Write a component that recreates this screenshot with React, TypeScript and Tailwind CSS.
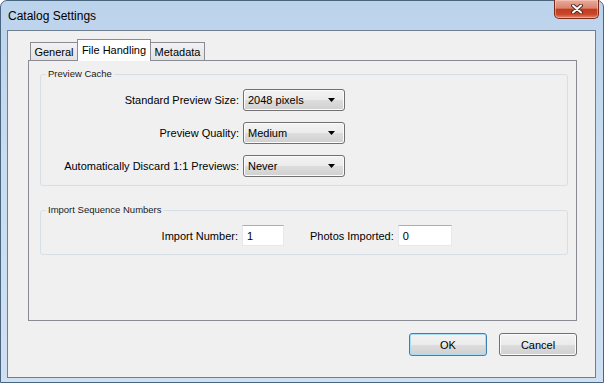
import React from 'react';

const btnFace =
  'bg-[linear-gradient(#f3f3f3_0%,#ebebeb_50%,#dddddd_51%,#d0d0d0_100%)] shadow-[inset_0_0_0_1px_#fcfcfc]';

const Select: React.FC<{ value: string }> = ({ value }) => (
  <div
    className={`w-[102px] h-[22px] flex items-center justify-between pl-[4px] pr-[9px] border border-[#707070] rounded-[3px] ${btnFace}`}
  >
    <span>{value}</span>
    <svg width="7" height="4" viewBox="0 0 7 4">
      <path d="M0 0H7L3.5 4Z" fill="#000" />
    </svg>
  </div>
);

const Field: React.FC<{ value: string; width: string }> = ({ value, width }) => (
  <div
    className={`${width} h-[21px] flex items-center pl-[4px] bg-white border border-[#e3e9ef] border-t-[#abadb3]`}
  >
    {value}
  </div>
);

const Group: React.FC<{ title: string; className?: string; children: React.ReactNode }> = ({
  title,
  className = '',
  children,
}) => (
  <fieldset className={`border border-[#d5dfe5] rounded-[3px] ${className}`}>
    <legend className="ml-[5px] px-[2px] text-[9.5px] leading-[12px] text-[#1b1b1b]">{title}</legend>
    {children}
  </fieldset>
);

export default function App() {
  return (
    <div className="w-[605px] h-[383px] overflow-hidden bg-[#fff]">
      <div className="w-[604px] h-[383px] flex flex-col rounded-t-[7px] border border-[#4a6580] bg-[linear-gradient(180deg,#bcd3ec_0%,#c9dcf0_40%,#cfe0f2_100%)] font-['Liberation_Sans',Arial,sans-serif] text-black">
        {/* Title bar */}
        <div className="h-[29px] flex items-start justify-between pl-[7px] pr-[4px]">
          <div className="pt-[7px] text-[12px] leading-[16px]">Catalog Settings</div>
          <div className="w-[45px] h-[19px] -mt-[1px] flex items-center justify-center rounded-b-[5px] border border-[#7a2b1c] border-t-0 bg-[linear-gradient(#e9ab9b_0%,#d98470_45%,#c43b1d_52%,#c9482a_80%,#e08a74_100%)] shadow-[inset_0_0_0_1px_rgba(255,220,210,0.45)]">
            <svg width="12" height="10" viewBox="0 0 12 10">
              <path d="M2 1.5L10 8.5M10 1.5L2 8.5" stroke="#5a2a22" strokeWidth="4" strokeLinecap="round" />
              <path d="M2 1.5L10 8.5M10 1.5L2 8.5" stroke="#ffffff" strokeWidth="2" strokeLinecap="round" />
            </svg>
          </div>
        </div>

        {/* Client area */}
        <div className="ml-[6px] w-[589px] h-[348px] border border-[#6f7f90] bg-[#f0f0f0] pt-[8px] pl-[20px] pr-[18px] text-[11px] leading-[14px]">
          {/* Tabs */}
          <div className="flex items-end ml-[2px] h-[21px]">
            <div className="w-[48px] h-[18px] flex items-center justify-center border border-b-0 border-[#898c95] bg-[linear-gradient(#f2f2f2,#e3e3e3)]">
              General
            </div>
            <div className="relative z-10 w-[74px] h-[22px] -mb-[1px] -ml-[1px] flex items-start justify-center pt-[3px] border border-b-0 border-[#898c95] bg-white">
              File Handling
            </div>
            <div className="w-[55px] h-[18px] -ml-[1px] flex items-center justify-center border border-b-0 border-[#898c95] bg-[linear-gradient(#f2f2f2,#e3e3e3)]">
              Metadata
            </div>
          </div>

          {/* Tab panel */}
          <div className="h-[261px] border border-[#898c95] bg-[#f0f0f0] pl-[11px] pr-[8px] pt-[7px]">
            <Group title="Preview Cache" className="h-[118px] pt-[9px]">
              <div className="flex flex-col gap-[11px]">
                {[
                  ['Standard Preview Size:', '2048 pixels'],
                  ['Preview Quality:', 'Medium'],
                  ['Automatically Discard 1:1 Previews:', 'Never'],
                ].map(([label, value]) => (
                  <div key={label} className="flex items-center gap-[4px]">
                    <div className="w-[198px] text-right">{label}</div>
                    <Select value={value} />
                  </div>
                ))}
              </div>
            </Group>

            <Group title="Import Sequence Numbers" className="mt-[18px] h-[51px] pt-[9px]">
              <div className="flex items-center">
                <div className="w-[197px] text-right">Import Number:</div>
                <div className="ml-[4px]">
                  <Field value="1" width="w-[42px]" />
                </div>
                <div className="ml-[26px]">Photos Imported:</div>
                <div className="ml-[4px]">
                  <Field value="0" width="w-[54px]" />
                </div>
              </div>
            </Group>
          </div>

          {/* Buttons */}
          <div className="mt-[12px] flex justify-end gap-[12px]">
            <button className="w-[78px] h-[23px] rounded-[3px] border border-[#3c7fb1] bg-[linear-gradient(#f3f3f3_0%,#ebebeb_50%,#dddddd_51%,#d0d0d0_100%)] shadow-[inset_0_0_0_1px_#a9dcf6]">
              OK
            </button>
            <button className={`w-[78px] h-[23px] rounded-[3px] border border-[#707070] ${btnFace}`}>
              Cancel
            </button>
          </div>
        </div>
      </div>
    </div>
  );
}
